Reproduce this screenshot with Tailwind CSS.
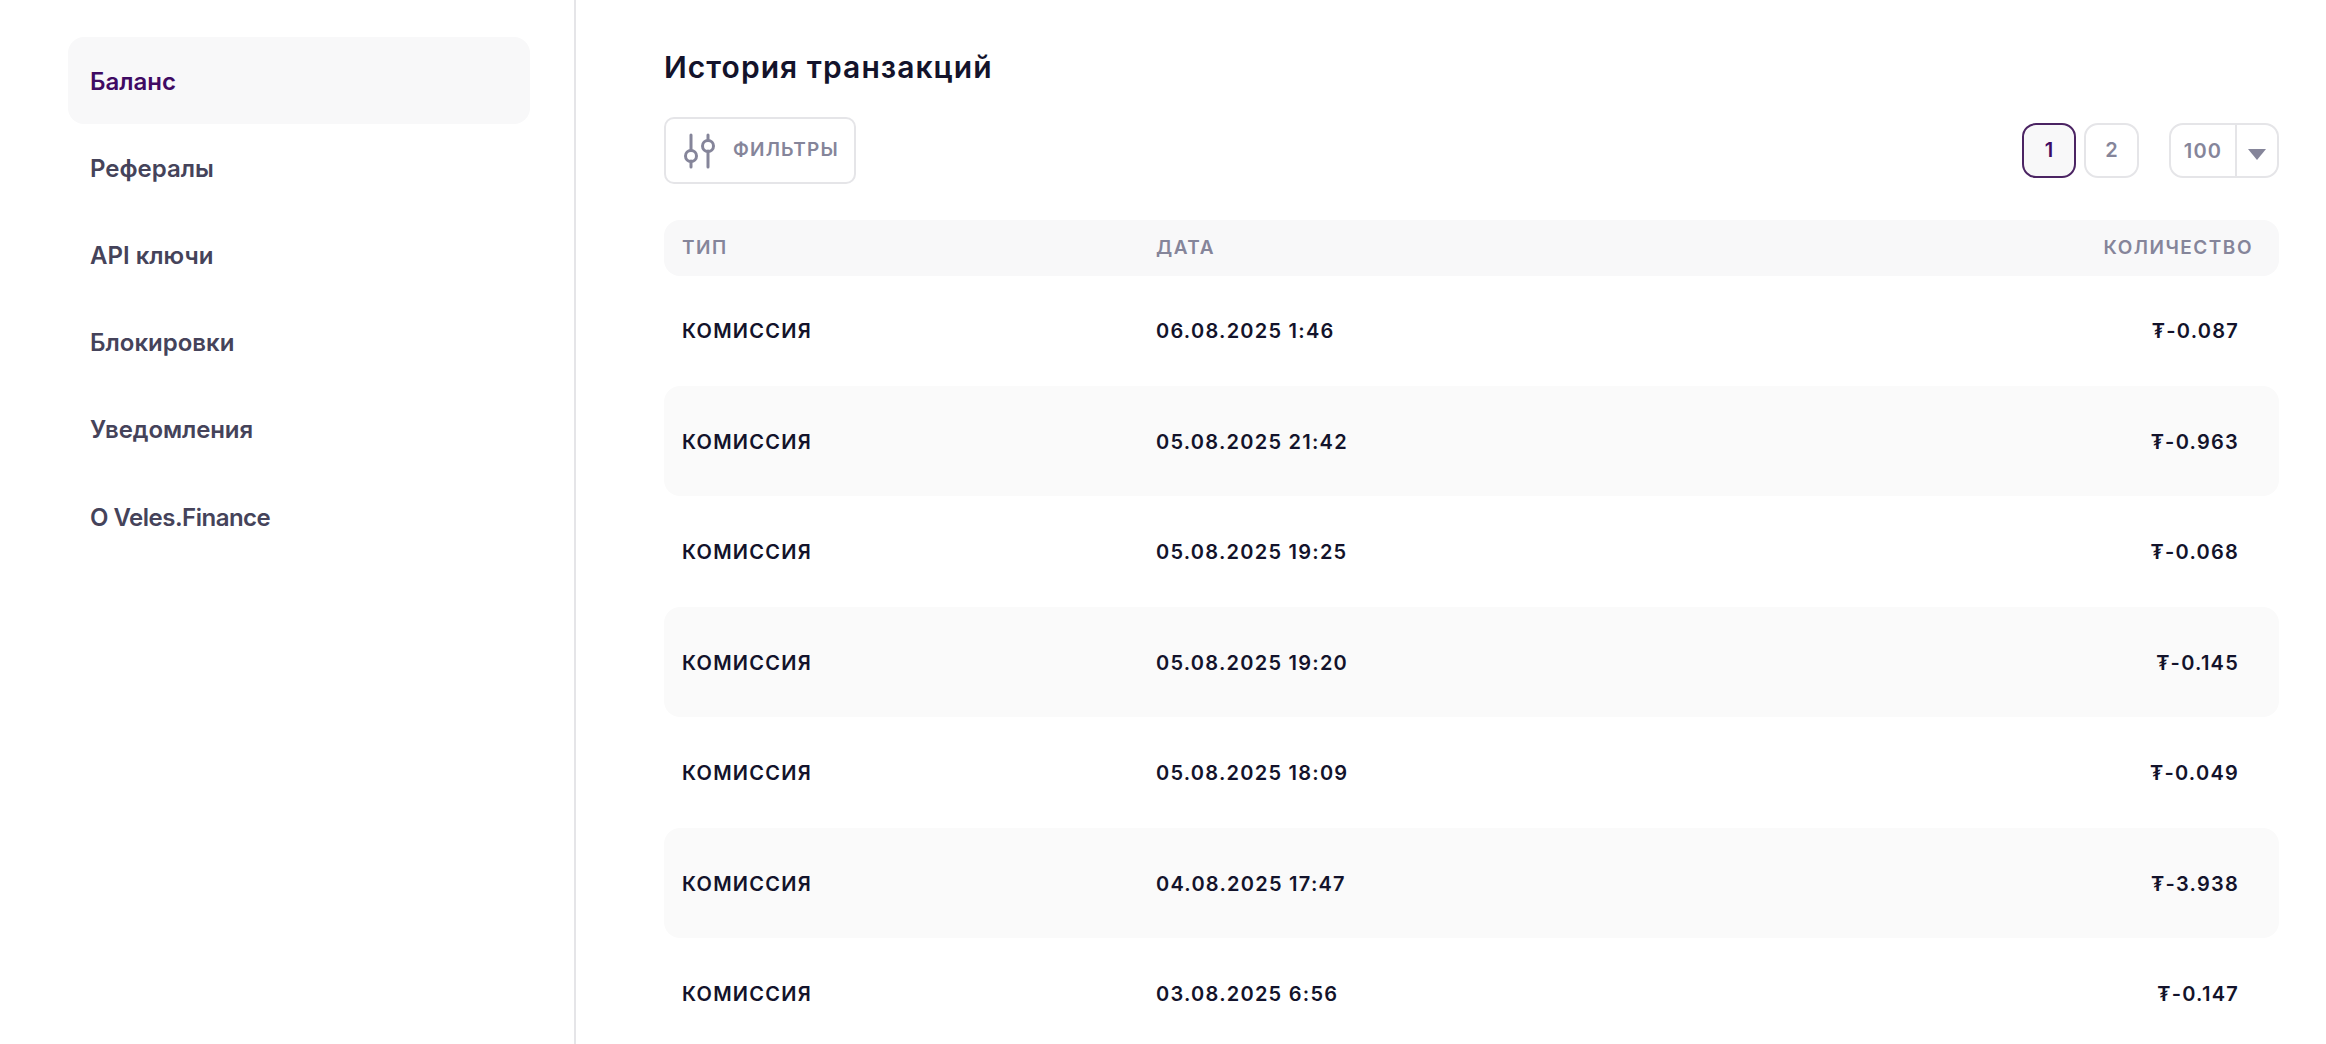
<!DOCTYPE html>
<html lang="ru"><head><meta charset="utf-8"><script src="https://cdn.jsdelivr.net/npm/@tailwindcss/browser@4"></script></head>
<body class="bg-white overflow-hidden">
<div class="flex w-[2326px] h-[1044px] overflow-hidden font-['Inter',sans-serif]">
<aside class="w-[576px] h-full shrink-0 border-r-2 border-[#e5e5e8] pt-[37px] pl-[68px] pr-[44px]">
<nav class="flex flex-col text-[24px] font-semibold leading-[89px] text-[#45435a]">
<div class="h-[87px] pl-[22px] rounded-[16px] bg-[#f8f8f9] text-[#3f0a63]">Баланс</div>
<div class="h-[87px] pl-[22px]">Рефералы</div>
<div class="h-[87px] pl-[22px]">API ключи</div>
<div class="h-[87px] pl-[22px]">Блокировки</div>
<div class="h-[87px] pl-[22px] tracking-[-0.1px]">Уведомления</div>
<div class="h-[87.5px] pl-[22px] tracking-[-0.5px] leading-[91px]">O Veles.Finance</div>
</nav>
</aside>
<main class="flex-1 pl-[88px] pr-[47px]">
<h1 class="pt-[47px] h-[117px] text-[30px] leading-[40px] font-semibold tracking-[1.05px] text-[#13132b]">История транзакций</h1>
<div class="flex items-center justify-between h-[67px] mb-[36px]">
<button class="flex items-center w-[192px] h-[67px] border-2 border-[#e5e5e8] rounded-[10px] pl-[17px] gap-[16px] text-[19px] font-semibold tracking-[1.2px] text-[#85859a]">
<svg width="34" height="36" viewBox="0 0 34 36" fill="none" stroke="#85859a" stroke-width="3" stroke-linecap="round"><path d="M8 2V17M8 28V34M25 2V7M25 18V34"/><circle cx="8" cy="23" r="5.5"/><circle cx="25" cy="13" r="5.5"/></svg>
ФИЛЬТРЫ</button>
<div class="flex items-center">
<div class="flex items-center justify-center w-[54px] h-[55px] pb-[2px] border-2 border-[#4b2463] rounded-[14px] bg-[#f8f8f9] text-[20px] font-semibold text-[#3f0a63]">1</div>
<div class="flex items-center justify-center w-[55px] h-[55px] pb-[2px] ml-[8px] border-2 border-[#e5e5e8] rounded-[14px] text-[20px] font-semibold text-[#85859a]">2</div>
<div class="flex items-center w-[110px] h-[55px] ml-[30px] border-2 border-[#e5e5e8] rounded-[14px] text-[20px] font-semibold tracking-[1.2px] text-[#85859a]">
<span class="w-[66px] h-full pt-[1px] flex items-center justify-center border-r-2 border-[#e5e5e8]">100</span>
<span class="flex-1 flex justify-center pt-[8px]"><svg width="18" height="11" viewBox="0 0 18 11"><path d="M0 0H18L9 11Z" fill="#85859a"/></svg></span>
</div>
</div>
</div>
<div class="grid grid-cols-[474px_1fr_auto] items-center h-[56px] rounded-[16px] bg-[#f8f8f9] pl-[18px] pr-[26px] text-[19px] font-semibold tracking-[1.5px] text-[#85859a]">
<span>ТИП</span><span>ДАТА</span><span>КОЛИЧЕСТВО</span>
</div>
<div class="text-[20px] font-semibold tracking-[1.25px] text-[#13132b] -mt-[1px]">
<div class="grid grid-cols-[474px_1fr_auto] items-center h-[110.5px] pl-[18px] pr-[40px] pt-[2px] rounded-[16px]"><span>КОМИССИЯ</span><span>06.08.2025 1:46</span><span>₮-0.087</span></div>
<div class="grid grid-cols-[474px_1fr_auto] items-center h-[110.5px] pl-[18px] pr-[40px] pt-[2px] rounded-[16px] bg-[#fafafa]"><span>КОМИССИЯ</span><span>05.08.2025 21:42</span><span>₮-0.963</span></div>
<div class="grid grid-cols-[474px_1fr_auto] items-center h-[110.5px] pl-[18px] pr-[40px] pt-[2px] rounded-[16px]"><span>КОМИССИЯ</span><span>05.08.2025 19:25</span><span>₮-0.068</span></div>
<div class="grid grid-cols-[474px_1fr_auto] items-center h-[110.5px] pl-[18px] pr-[40px] pt-[2px] rounded-[16px] bg-[#fafafa]"><span>КОМИССИЯ</span><span>05.08.2025 19:20</span><span>₮-0.145</span></div>
<div class="grid grid-cols-[474px_1fr_auto] items-center h-[110.5px] pl-[18px] pr-[40px] pt-[2px] rounded-[16px]"><span>КОМИССИЯ</span><span>05.08.2025 18:09</span><span>₮-0.049</span></div>
<div class="grid grid-cols-[474px_1fr_auto] items-center h-[110.5px] pl-[18px] pr-[40px] pt-[2px] rounded-[16px] bg-[#fafafa]"><span>КОМИССИЯ</span><span>04.08.2025 17:47</span><span>₮-3.938</span></div>
<div class="grid grid-cols-[474px_1fr_auto] items-center h-[110.5px] pl-[18px] pr-[40px] pt-[2px] rounded-[16px]"><span>КОМИССИЯ</span><span>03.08.2025 6:56</span><span>₮-0.147</span></div>
</div>
</main>
</div>
</body></html>
